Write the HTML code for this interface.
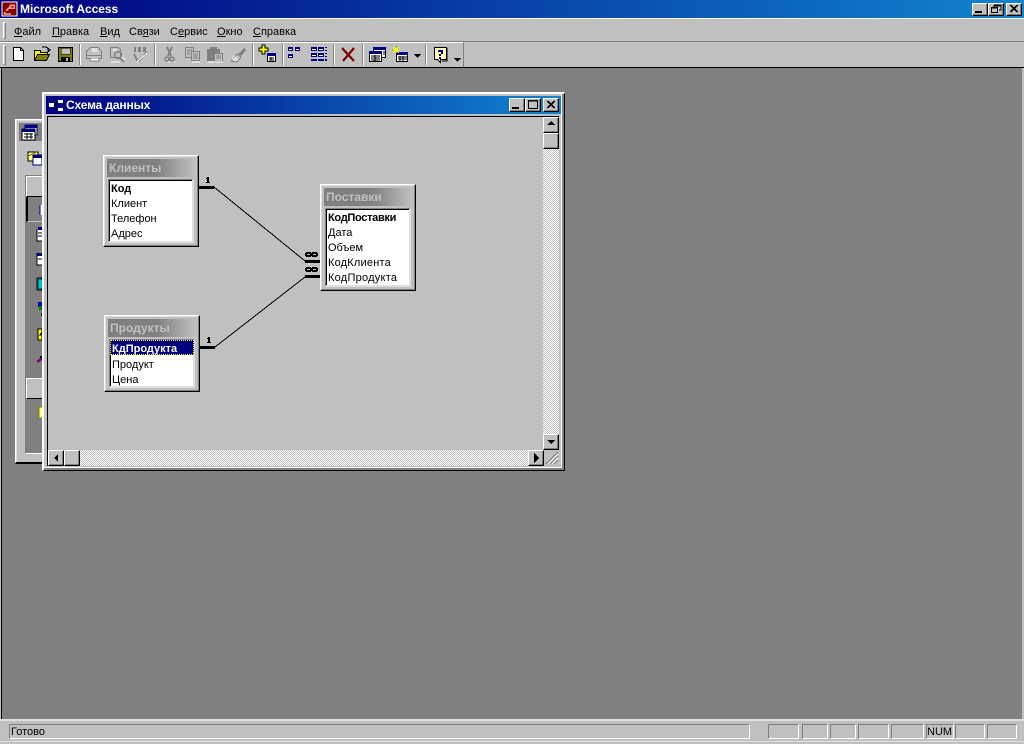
<!DOCTYPE html>
<html><head><meta charset="utf-8"><style>
html,body{margin:0;padding:0;width:1024px;height:744px;overflow:hidden;background:#c0c0c0}
div{position:absolute;box-sizing:border-box}
body{font:11px "Liberation Sans","Noto Sans CJK SC",sans-serif;color:#000}
.t{white-space:nowrap;line-height:15px;height:15px}
.b{font-weight:bold}
u{text-decoration:underline}
.btn{background:#c0c0c0;border-top:1px solid #fff;border-left:1px solid #fff;border-right:1px solid #000;border-bottom:1px solid #000;box-shadow:inset -1px -1px 0 #808080}
.dith{background:conic-gradient(#fff 25%,#c0c0c0 0 50%,#fff 0 75%,#c0c0c0 0);background-size:2px 2px}
.tbl{background:#c0c0c0;border-top:1px solid #fff;border-left:1px solid #fff;border-right:1px solid #000;border-bottom:1px solid #000;box-shadow:inset -1px -1px 0 #808080,inset 1px 1px 0 #dfdfdf}
.cap{background:linear-gradient(90deg,#808080 0,#808080 55%,#c0c0c0 100%);color:#c0c0c0;font-weight:bold;font-size:12px;line-height:18px;padding-left:2px;height:18px}
.lst{background:#fff;border-top:1px solid #808080;border-left:1px solid #808080;border-right:2px solid #dfdfdf;border-bottom:2px solid #dfdfdf;box-shadow:inset 1px 1px 0 #000}
.st{height:15px;top:724px;border-top:1px solid #808080;border-left:1px solid #808080;border-right:1px solid #fff;border-bottom:1px solid #fff}
svg{position:absolute;left:0;top:0}
</style></head><body>

<!-- main title -->
<div style="left:0;top:0;width:1024px;height:18px;background:linear-gradient(90deg,#000080,#1084d0)"></div>
<div class="t b" style="left:20px;top:2px;color:#fff;font-size:12px;letter-spacing:-.05px">Microsoft Access</div>
<div style="left:0;top:18px;width:1024px;height:1px;background:#fff"></div>
<div style="left:0;top:41px;width:1024px;height:1px;background:#808080"></div>
<div style="left:0;top:42px;width:1024px;height:1px;background:#fff"></div>
<div style="left:463px;top:42px;width:561px;height:1px;background:#c0c0c0"></div>
<div style="left:463px;top:42px;width:1px;height:25px;background:#808080"></div>
<div style="left:0;top:67px;width:1024px;height:1px;background:#000"></div>

<!-- menu -->
<div style="left:3px;top:22px;width:3px;height:17px;border:1px solid;border-color:#fff #808080 #808080 #fff"></div>
<div class="t" style="left:14px;top:25px"><u>Ф</u>айл</div>
<div class="t" style="left:52px;top:25px"><u>П</u>равка</div>
<div class="t" style="left:100px;top:25px"><u>В</u>ид</div>
<div class="t" style="left:129px;top:25px">Св<u>я</u>зи</div>
<div class="t" style="left:170px;top:25px">С<u>е</u>рвис</div>
<div class="t" style="left:217px;top:25px"><u>О</u>кно</div>
<div class="t" style="left:253px;top:25px"><u>С</u>правка</div>

<!-- toolbar gripper & separators -->
<div style="left:3px;top:45px;width:3px;height:20px;border:1px solid;border-color:#fff #808080 #808080 #fff"></div>
<div style="left:79px;top:44px;width:2px;height:21px;border-left:1px solid #808080;border-right:1px solid #fff"></div>
<div style="left:154px;top:44px;width:2px;height:21px;border-left:1px solid #808080;border-right:1px solid #fff"></div>
<div style="left:252px;top:44px;width:2px;height:21px;border-left:1px solid #808080;border-right:1px solid #fff"></div>
<div style="left:282px;top:44px;width:2px;height:21px;border-left:1px solid #808080;border-right:1px solid #fff"></div>
<div style="left:333px;top:44px;width:2px;height:21px;border-left:1px solid #808080;border-right:1px solid #fff"></div>
<div style="left:362px;top:44px;width:2px;height:21px;border-left:1px solid #808080;border-right:1px solid #fff"></div>
<div style="left:425px;top:44px;width:2px;height:21px;border-left:1px solid #808080;border-right:1px solid #fff"></div>

<!-- MDI -->
<div style="left:0;top:68px;width:1024px;height:652px;background:#808080;border-left:1px solid #c0c0c0;border-right:2px solid #c0c0c0"></div>
<div style="left:1px;top:68px;width:1px;height:651px;background:#000"></div>
<div style="left:0;top:719px;width:1024px;height:2px;background:#dfdfdf"></div>

<!-- back window -->
<div style="left:15px;top:119px;width:40px;height:345px;background:#c0c0c0;border-top:1px solid #fff;border-left:1px solid #fff;border-bottom:2px solid #000;box-shadow:inset 1px 1px 0 #dfdfdf"></div>
<div style="left:19px;top:123px;width:30px;height:18px;background:#808080"></div>
<div style="left:25px;top:175px;width:25px;height:279px;background:#808080;border-left:1px solid #808080;border-top:1px solid #808080;border-bottom:1px solid #fff"></div>
<div style="left:26px;top:176px;width:25px;height:21px;background:#c0c0c0;border-top:1px solid #fff;border-left:1px solid #fff;border-bottom:1px solid #000"></div>
<div style="left:26px;top:197px;width:25px;height:25px;background:#808080;border-left:2px solid #000;border-bottom:1px solid #c0c0c0"></div>
<div style="left:26px;top:378px;width:25px;height:21px;background:#c0c0c0;border-top:1px solid #fff;border-left:1px solid #fff;border-bottom:1px solid #000"></div>

<!-- back window icons -->
<svg width="1024" height="744" shape-rendering="crispEdges">
<g>
<rect x="25" y="125" width="12" height="10" fill="#fff" stroke="#000080"/><rect x="25" y="125" width="12" height="3" fill="#000080"/>
<rect x="22" y="129" width="13" height="11" fill="#fff" stroke="#000"/><rect x="22" y="129" width="13" height="3" fill="#000080"/>
<path d="M24 134h9M24 137h9M27 133v6M31 133v6" stroke="#000" fill="none"/>
<rect x="28" y="152" width="10" height="9" fill="#ffff80" stroke="#000"/><path d="M28 156l9-4" stroke="#808000"/>
<rect x="33" y="155" width="9" height="10" fill="#fff" stroke="#000080"/><rect x="33" y="155" width="9" height="3" fill="#000080"/>
<rect x="40" y="205" width="2" height="10" fill="#fff"/><path d="M40 205v10" stroke="#000080"/>
<rect x="37" y="229" width="5" height="12" fill="#fff"/><rect x="38" y="227" width="4" height="3" fill="#000080"/><path d="M37 229v12h5M38 233h4M38 236h4" stroke="#000" fill="none"/>
<rect x="37" y="253" width="5" height="12" fill="#fff"/><rect x="37" y="253" width="5" height="3" fill="#000080"/><path d="M37 253v12h5M38 259h4" stroke="#000" fill="none"/>
<rect x="37" y="278" width="5" height="12" fill="#008080" stroke="#000"/><rect x="39" y="280" width="3" height="8" fill="#00c0c0"/>
<rect x="38" y="302" width="4" height="5" fill="#0000c0"/><rect x="39" y="306" width="3" height="4" fill="#008000"/><rect x="41" y="313" width="1" height="3" fill="#000"/>
<path d="M38 329h4v3l-2 3h2v5h-4z" fill="#ffff00" stroke="#000"/>
<path d="M36 361l6-4v3l-4 3z" fill="#800080"/><rect x="40" y="356" width="2" height="2" fill="#000"/>
<rect x="39" y="407" width="4" height="11" fill="#ffff80" stroke="#808000"/>
</g>
</svg>

<!-- schema window -->
<div style="left:42px;top:92px;width:523px;height:379px;background:#c0c0c0;border-top:2px solid #fff;border-left:2px solid #fff;border-right:1px solid #000;border-bottom:1px solid #000;box-shadow:inset -2px -2px 0 #808080,inset 2px 2px 0 #c0c0c0"></div>
<div style="left:561px;top:94px;width:1px;height:374px;background:#fff"></div>
<div style="left:44px;top:467px;width:518px;height:1px;background:#fff"></div>
<div style="left:46px;top:96px;width:515px;height:18px;background:linear-gradient(90deg,#000080,#1084d0)"></div>
<div class="t b" style="left:66px;top:98px;color:#fff;font-size:12px;letter-spacing:-.15px">Схема данных</div>
<!-- client -->
<div style="left:47px;top:116px;width:512px;height:350px;background:#c0c0c0;border-top:1px solid #000;border-left:1px solid #000"></div>
<div class="dith" style="left:543px;top:117px;width:16px;height:333px"></div>
<div class="dith" style="left:48px;top:450px;width:495px;height:16px"></div>
<div class="btn" style="left:543px;top:117px;width:16px;height:16px"></div>
<div class="btn" style="left:543px;top:133px;width:16px;height:16px"></div>
<div class="btn" style="left:543px;top:434px;width:16px;height:16px"></div>
<div class="btn" style="left:48px;top:450px;width:16px;height:16px"></div>
<div class="btn" style="left:64px;top:450px;width:16px;height:16px"></div>
<div class="btn" style="left:528px;top:450px;width:16px;height:16px"></div>
<div style="left:544px;top:450px;width:15px;height:16px;background:#c0c0c0"></div>

<!-- tables -->
<div class="tbl" style="left:103px;top:155px;width:96px;height:92px"></div>
<div class="cap" style="left:107px;top:159px;width:88px">Клиенты</div>
<div class="lst" style="left:108px;top:179px;width:86px;height:64px"></div>
<div class="t b" style="left:111px;top:182px">Код</div>
<div class="t" style="left:111px;top:197px">Клиент</div>
<div class="t" style="left:111px;top:212px">Телефон</div>
<div class="t" style="left:111px;top:227px">Адрес</div>

<div class="tbl" style="left:320px;top:184px;width:96px;height:107px"></div>
<div class="cap" style="left:324px;top:188px;width:88px">Поставки</div>
<div class="lst" style="left:325px;top:208px;width:86px;height:79px"></div>
<div class="t b" style="left:328px;top:211px;letter-spacing:-.3px">КодПоставки</div>
<div class="t" style="left:328px;top:226px">Дата</div>
<div class="t" style="left:328px;top:241px">Объем</div>
<div class="t" style="left:328px;top:256px;letter-spacing:.2px">КодКлиента</div>
<div class="t" style="left:328px;top:271px;letter-spacing:.25px">КодПродукта</div>

<div class="tbl" style="left:104px;top:315px;width:96px;height:77px"></div>
<div class="cap" style="left:108px;top:319px;width:88px">Продукты</div>
<div class="lst" style="left:109px;top:339px;width:86px;height:49px"></div>
<div style="left:110px;top:340px;width:84px;height:15px;background:#000080;border:1px dotted #ffff00"></div>
<div class="t b" style="left:112px;top:342px;color:#fff">КдПродукта</div>
<div class="t" style="left:112px;top:358px">Продукт</div>
<div class="t" style="left:112px;top:373px">Цена</div>

<!-- relations, window controls and toolbar icons -->
<svg width="1024" height="744">
<g fill="none" stroke="#000" stroke-width="1" shape-rendering="crispEdges">
<path d="M214 187L305 261"/><path d="M215 347L305 277"/>
</g>
<g shape-rendering="crispEdges">
<rect x="199" y="186" width="15" height="3" fill="#000"/>
<rect x="305" y="260" width="15" height="3" fill="#000"/>
<rect x="305" y="275" width="15" height="3" fill="#000"/>
<rect x="200" y="346" width="15" height="3" fill="#000"/>
<!-- 1 -->
<path d="M207 177h2v5h1v1h-4v-1h1v-3h-1v-1h1z" fill="#000"/>
<path d="M208 337h2v5h1v1h-4v-1h1v-3h-1v-1h1z" fill="#000"/>
<!-- infinity -->
<rect x="305" y="252" width="13" height="5" fill="#000"/><rect x="307" y="254" width="3" height="1" fill="#c0c0c0"/><rect x="313" y="254" width="3" height="1" fill="#c0c0c0"/>
<path d="M305 252h1v1h-1zM305 256h1v1h-1zM317 252h1v1h-1zM317 256h1v1h-1zM311 252h1v1h-1zM311 256h1v1h-1z" fill="#c0c0c0"/>
<rect x="305" y="267" width="13" height="5" fill="#000"/><rect x="307" y="269" width="3" height="1" fill="#c0c0c0"/><rect x="313" y="269" width="3" height="1" fill="#c0c0c0"/>
<path d="M305 267h1v1h-1zM305 271h1v1h-1zM317 267h1v1h-1zM317 271h1v1h-1zM311 267h1v1h-1zM311 271h1v1h-1z" fill="#c0c0c0"/>

<!-- scroll arrows -->
<path d="M551 121l4 4h-8z" fill="#000"/>
<path d="M547 440h8l-4 4z" fill="#000"/>
<path d="M54 458l4-4v8z" fill="#000"/>
<path d="M534 453l5 5-5 5z" fill="#000"/>
<!-- grip -->
<path d="M558 452l-12 12M558 456l-8 8M558 460l-4 4" stroke="#808080" stroke-width="1.2" fill="none" shape-rendering="auto"/>
<path d="M558 454l-10 10M558 458l-6 6" stroke="#fff" stroke-width="1" fill="none" shape-rendering="auto"/>

<!-- schema title icon -->
<rect x="49" y="103" width="5" height="4" fill="#fff"/><rect x="58" y="100" width="5" height="3" fill="#fff"/><rect x="58" y="108" width="5" height="3" fill="#fff"/>
<path d="M54 105l4-3M54 105l4 4" stroke="#000" fill="none"/>
</g>

<!-- main title icon -->
<g shape-rendering="crispEdges">
<rect x="2" y="2" width="15" height="14" fill="#800000" stroke="#fff" stroke-width="1"/>
<path d="M6 11l5-5M10 5h4v3h-4zM5 12l-1 2" stroke="#ff9090" stroke-width="1.5" fill="none"/>
<path d="M4 14h7" stroke="#fff" fill="none"/>

<!-- New -->
<path d="M13.500 47.500h7l3 3v10h-10z" fill="#fff" stroke="#000"/><path d="M20.500 47.500v3h3" stroke="#000" fill="none"/>
<!-- Open -->
<path d="M34.500 50.500h6v2h7v2h-10l-3 6z" fill="#ffff00" stroke="#000"/>
<path d="M34.500 60.500l3-6h12l-3 6z" fill="#808000" stroke="#000"/>
<path d="M42 47h4l3 2-1 3M47 50h3l-2 2" stroke="#000" fill="none"/>
<!-- Save -->
<rect x="58.500" y="47.500" width="14" height="14" fill="#808000" stroke="#000"/>
<rect x="61" y="48" width="9" height="6" fill="#c0c0c0" stroke="#000" stroke-width="0.5"/>
<rect x="61" y="57" width="9" height="4" fill="#000"/><rect x="66" y="58" width="2" height="3" fill="#c0c0c0"/>

<!-- Print (gray) -->
<path d="M90.500 47.500h8l3 4v4h-15v-4z" fill="#c0c0c0" stroke="#808080"/>
<rect x="86" y="53" width="16" height="6" fill="#808080"/><path d="M87 54h14M87 57h14" stroke="#fff"/>
<rect x="90" y="58" width="9" height="3" fill="#fff" stroke="#808080"/><path d="M92 49h5M92 51h6" stroke="#fff"/>
<!-- Preview -->
<path d="M110.500 47.500h8l2 2v8h-10z" fill="#c0c0c0" stroke="#808080"/><path d="M111 62h9" stroke="#fff"/>
<circle cx="118" cy="55" r="3.500" fill="none" stroke="#808080" stroke-width="1.500"/>
<path d="M120 58l4 4" stroke="#808080" stroke-width="2"/><path d="M122 57l3 3M113 50h4" stroke="#fff"/>
<!-- Spell -->
<path d="M134 47h2v5h-2zM138 47h3v5h-3zM143 47h3v5h-3z" fill="#808080"/>
<path d="M134 54l3 6 2 1 8-9" stroke="#808080" stroke-width="2" fill="none"/><path d="M137 62l10-9" stroke="#fff"/>

<!-- Cut -->
<path d="M167 47l4 9M172 47l-4 9" stroke="#808080" stroke-width="2" fill="none"/>
<circle cx="167" cy="59" r="2" fill="#c0c0c0" stroke="#808080" stroke-width="1.500"/><circle cx="172" cy="59" r="2" fill="#c0c0c0" stroke="#808080" stroke-width="1.500"/>
<path d="M168 62h2M174 62h1" stroke="#fff"/>
<!-- Copy -->
<rect x="185.500" y="47.500" width="8" height="10" fill="#c0c0c0" stroke="#808080"/>
<rect x="191.500" y="51.500" width="8" height="9" fill="#c0c0c0" stroke="#808080"/>
<path d="M187 50h5M187 52h3M187 54h3M193 54h5M193 56h5M193 58h5" stroke="#808080"/><path d="M192 62h8" stroke="#fff"/>
<!-- Paste -->
<rect x="207" y="49" width="13" height="12" fill="#808080"/><rect x="210" y="47" width="7" height="3" fill="#808080"/>
<rect x="214.500" y="53.500" width="8" height="8" fill="#c0c0c0" stroke="#808080"/><path d="M216 56h5M216 58h5" stroke="#808080"/><path d="M208 62h15" stroke="#fff"/>
<!-- Format painter -->
<path d="M231 61l6-7 4 3-4 5z" fill="#c0c0c0" stroke="#808080"/>
<path d="M238 54l6-6 2 2-5 6z" fill="#808080"/><path d="M232 58l4 3M233 56l5 4" stroke="#fff"/>

<!-- Add table -->
<path d="M262 45h3v3h3v3h-3v3h-3v-3h-3v-3h3z" fill="#ffff00" stroke="#000"/>
<rect x="267.500" y="53.500" width="8" height="8" fill="#fff" stroke="#000"/><rect x="267" y="53" width="9" height="3" fill="#000080"/>
<path d="M269 58h5M269 60h5M271 57v3" stroke="#000"/>

<!-- Direct relations -->
<rect x="288.500" y="47.500" width="4" height="3" fill="#fff" stroke="#000080"/><rect x="288" y="47" width="5" height="1" fill="#000080"/>
<rect x="295.500" y="47.500" width="4" height="3" fill="#fff" stroke="#000080"/>
<rect x="288.500" y="54.500" width="4" height="3" fill="#fff" stroke="#000080"/>
<path d="M288 47h5v2h-5zM295 47h5v2h-5zM288 54h5v2h-5z" fill="#000080"/>
<!-- All relations -->
<g fill="#fff" stroke="#000080">
<rect x="311.500" y="47.500" width="5" height="3"/><rect x="318.500" y="47.500" width="5" height="3"/>
<rect x="311.500" y="53.500" width="5" height="3"/><rect x="318.500" y="53.500" width="5" height="3"/>
</g>
<path d="M311 47h6v2h-6zM318 47h6v2h-6zM311 53h6v2h-6zM318 53h6v2h-6zM311 59h6v2h-6zM318 59h6v2h-6zM325 47h2v1h-2zM325 50h2v1h-2zM325 53h2v1h-2zM325 56h2v1h-2zM325 59h2v2h-2z" fill="#000080"/>

<!-- Delete -->
<path d="M342 48l12 13M354 48l-11 13" stroke="#800000" stroke-width="2.200" fill="none" shape-rendering="auto"/>

<!-- DB window -->
<rect x="373.500" y="47.500" width="12" height="10" fill="#fff" stroke="#000"/><rect x="373" y="47" width="13" height="3" fill="#000080"/>
<rect x="369.500" y="51.500" width="12" height="10" fill="#fff" stroke="#000"/><rect x="369" y="51" width="13" height="3" fill="#000080"/>
<path d="M371 56h9M371 58h9M371 60h9M375 55v6M383 52h2M383 54h2" stroke="#000"/>

<!-- New object -->
<rect x="396.500" y="52.500" width="11" height="9" fill="#fff" stroke="#000"/><rect x="396" y="52" width="12" height="3" fill="#000080"/>
<path d="M398 57h9M398 59h9M400 56v5M403 56v5" stroke="#000"/>
<path d="M396 47v6M393 50h6M393 47l6 6M399 47l-6 6" stroke="#ffff00"/><path d="M392 50h1M396 47h1" stroke="#808000"/>
<path d="M414 54h7l-3.500 4z" fill="#000"/>

<!-- Help -->
<path d="M434.500 47.500h12v12h-6v3l-3-3h-3z" fill="#ffffc0" stroke="#000"/>
<path d="M447 48v13h-5" stroke="#000" fill="none"/>
<path d="M438 50h5v4h-2v2h-2v-2h2v-2h-3z" fill="#000080"/><rect x="439" y="57" width="2" height="2" fill="#000080"/>
<path d="M436 49h1M436 52h1M444 55h1M436 56h1M444 58h1" stroke="#ffff00"/>
<path d="M454 58h7l-3.500 4z" fill="#000"/>
</g>
</svg>

<!-- title buttons main -->
<div class="btn" style="left:972px;top:3px;width:16px;height:13px"></div>
<div class="btn" style="left:988px;top:3px;width:16px;height:13px"></div>
<div class="btn" style="left:1006px;top:3px;width:16px;height:13px"></div>
<!-- title buttons schema -->
<div class="btn" style="left:509px;top:98px;width:16px;height:14px"></div>
<div class="btn" style="left:525px;top:98px;width:16px;height:14px"></div>
<div class="btn" style="left:543px;top:98px;width:16px;height:14px"></div>
<svg width="1024" height="744" shape-rendering="crispEdges">
<rect x="975" y="11" width="7" height="2" fill="#000"/>
<path d="M994 5h7v5h-2M994 6h7M994 5v2" stroke="#000" fill="none"/>
<rect x="991.500" y="7.500" width="6" height="5" fill="#c0c0c0" stroke="#000"/><path d="M991 8h7" stroke="#000"/>
<path d="M1010 5l7 7M1011 5l7 7M1017 5l-7 7M1018 5l-7 7" stroke="#000" shape-rendering="auto" fill="none"/>
<rect x="512" y="107" width="7" height="2" fill="#000"/>
<rect x="528.500" y="100.500" width="9" height="8" fill="none" stroke="#000"/><path d="M528 101h10" stroke="#000"/>
<path d="M547 101l7 7M548 101l7 7M554 101l-7 7M555 101l-7 7" stroke="#000" shape-rendering="auto" fill="none"/>
</svg>

<!-- status bar -->
<div style="left:9px;top:724px;width:741px;height:15px;border-top:1px solid #808080;border-left:1px solid #808080;border-right:1px solid #fff;border-bottom:1px solid #fff"></div>
<div class="t" style="left:11px;top:725px">Готово</div>
<div class="st" style="left:768px;width:31px"></div>
<div class="st" style="left:802px;width:26px"></div>
<div class="st" style="left:830px;width:26px"></div>
<div class="st" style="left:858px;width:31px"></div>
<div class="st" style="left:891px;width:33px"></div>
<div class="st" style="left:926px;width:28px"></div>
<div class="t" style="left:927px;top:725px">NUM</div>
<div class="st" style="left:955px;width:30px"></div>
<div class="st" style="left:987px;width:30px"></div>
<div style="left:0;top:741px;width:1024px;height:1px;background:#dfdfdf"></div>
</body></html>
